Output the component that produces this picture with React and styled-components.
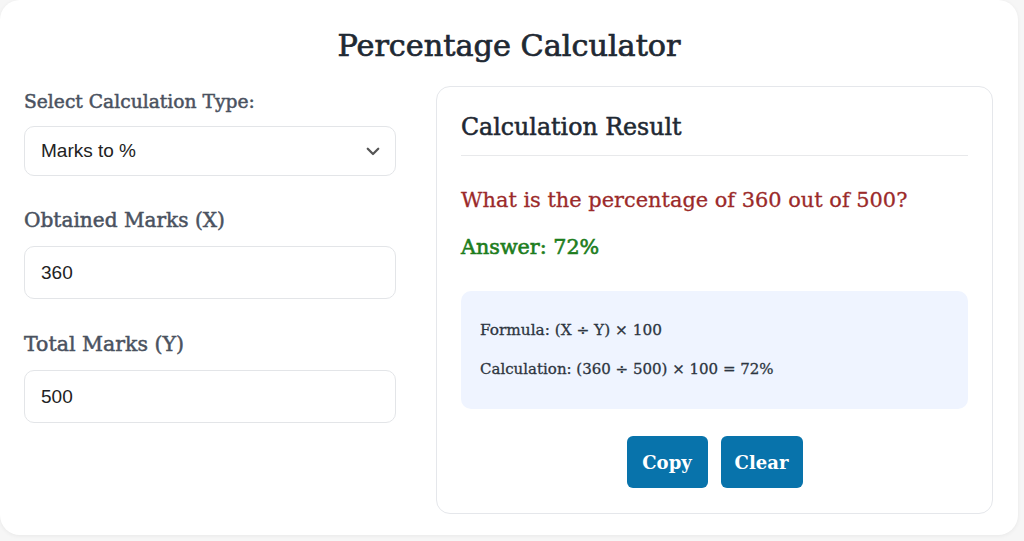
import React from "react";
import styled, { createGlobalStyle } from "styled-components";

const GlobalStyle = createGlobalStyle`
  html, body {
    margin: 0;
    padding: 0;
    background: #f6f6f6;
  }
  * {
    box-sizing: border-box;
  }
`;

const slab = `"DejaVu Serif", "Liberation Serif", serif`;
const sans = `"Liberation Sans", Arial, sans-serif`;

const Page = styled.div`
  width: 1024px;
  height: 541px;
  padding: 0 6px 6px 0;
`;

const Card = styled.div`
  height: 100%;
  background: #ffffff;
  border-radius: 20px;
  box-shadow: 0 1px 4px rgba(0, 0, 0, 0.06);
  padding: 26px 24px 0 24px;
`;

const Title = styled.h1`
  margin: 0 0 20px 0;
  text-align: center;
  font-family: ${slab};
  font-weight: 500;
  font-size: 30.3px;
  line-height: 40px;
  color: #1f2933;
  -webkit-text-stroke: 0.7px #1f2933;
`;

const Columns = styled.div`
  display: flex;
  gap: 40px;
  align-items: flex-start;
`;

const Form = styled.div`
  width: 372px;
  padding-top: 4px;
  display: flex;
  flex-direction: column;
`;

const Label = styled.label`
  display: block;
  font-family: ${slab};
  font-size: ${(p) => p.size || 20}px;
  line-height: 24px;
  color: #4a5260;
  -webkit-text-stroke: 0.5px #4a5260;
  margin: ${(p) => p.top || 0}px 0 ${(p) => p.bottom || 14}px 0;
`;

const Field = styled.div`
  position: relative;
  height: ${(p) => p.h || 53}px;
  border: 1px solid #e3e5e8;
  border-radius: 10px;
  background: #fff;
  display: flex;
  align-items: center;
  padding: 0 16px;
  font-family: ${sans};
  font-size: 19px;
  color: #222;
`;

const Chevron = styled.svg`
  position: absolute;
  right: 13px;
  top: 50%;
  transform: translateY(-50%);
`;

const Result = styled.div`
  width: 557px;
  height: 428px;
  border: 1px solid #e5e7eb;
  border-radius: 14px;
  padding: 23px 24px 0 24px;
  display: flex;
  flex-direction: column;
`;

const ResultTitle = styled.h2`
  margin: 0;
  padding-bottom: 11px;
  border-bottom: 1px solid #e8e9eb;
  font-family: ${slab};
  font-weight: 500;
  font-size: 23.7px;
  line-height: 34px;
  color: #1f2933;
  -webkit-text-stroke: 0.55px #1f2933;
`;

const Statement = styled.p`
  margin: ${(p) => p.top}px 0 0 0;
  font-family: ${slab};
  font-size: ${(p) => p.size}px;
  line-height: 30px;
  color: ${(p) => p.color};
  -webkit-text-stroke: ${(p) => p.stroke}px ${(p) => p.color};
`;

const FormulaBox = styled.div`
  margin-top: 29px;
  background: #eff4ff;
  border-radius: 10px;
  padding: 28px 19px 29px 19px;
  display: flex;
  flex-direction: column;
  gap: 17px;
`;

const FormulaLine = styled.div`
  font-family: ${slab};
  font-size: ${(p) => p.size || 15}px;
  line-height: 22px;
  color: #2d3540;
  -webkit-text-stroke: 0.3px #2d3540;
`;

const Buttons = styled.div`
  margin-top: 27px;
  display: flex;
  justify-content: center;
  gap: 13px;
`;

const Button = styled.button`
  width: ${(p) => p.w}px;
  height: 52px;
  padding: 0;
  border: none;
  border-radius: 6px;
  background: #0873ab;
  color: #fff;
  font-family: ${slab};
  font-weight: 700;
  font-size: 18px;
  cursor: pointer;
`;

export default function App() {
  return (
    <>
      <GlobalStyle />
      <Page>
        <Card>
          <Title>Percentage Calculator</Title>
          <Columns>
            <Form>
              <Label size={18.7} bottom={12}>Select Calculation Type:</Label>
              <Field h={50}>
                Marks to %
                <Chevron width="18" height="18" viewBox="0 0 24 24" fill="none" stroke="#555" strokeWidth="3" strokeLinecap="round" strokeLinejoin="round">
                  <path d="M5 9l7 7 7-7" />
                </Chevron>
              </Field>
              <Label size={20.1} top={32}>Obtained Marks (X)</Label>
              <Field>360</Field>
              <Label size={20.5} top={33}>Total Marks (Y)</Label>
              <Field>500</Field>
            </Form>
            <Result>
              <ResultTitle>Calculation Result</ResultTitle>
              <Statement top={29} size={20.9} stroke={0.3} color="#9b2a2a">
                What is the percentage of 360 out of 500?
              </Statement>
              <Statement top={17} size={20.7} stroke={0.6} color="#1d7d1d">
                Answer: 72%
              </Statement>
              <FormulaBox>
                <FormulaLine size={15.3}>Formula: (X ÷ Y) × 100</FormulaLine>
                <FormulaLine>Calculation: (360 ÷ 500) × 100 = 72%</FormulaLine>
              </FormulaBox>
              <Buttons>
                <Button w={81}>Copy</Button>
                <Button w={82}>Clear</Button>
              </Buttons>
            </Result>
          </Columns>
        </Card>
      </Page>
    </>
  );
}
